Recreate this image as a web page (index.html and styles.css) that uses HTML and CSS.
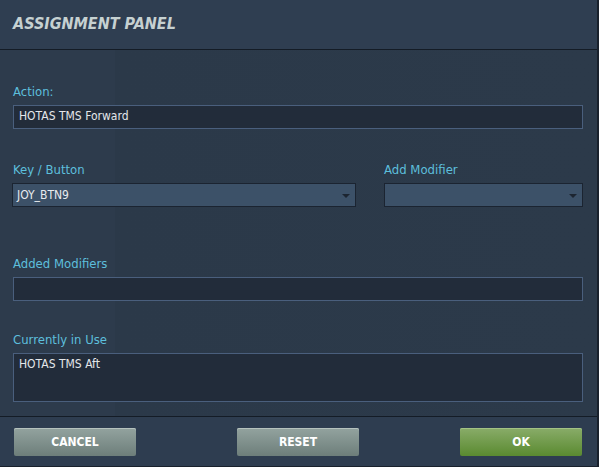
FILE: index.html
```
<!DOCTYPE html>
<html>
<head>
<meta charset="utf-8">
<link rel="stylesheet" href="styles.css">
</head>
<body>
<div class="panel">
  <div class="header"><h1 class="title">ASSIGNMENT PANEL</h1></div>
  <div class="content">
    <div class="label">Action:</div>
    <div class="field">HOTAS TMS Forward</div>

    <div class="row">
      <div class="col col-key">
        <div class="label label-key">Key / Button</div>
        <div class="select">JOY_BTN9<span class="arrow"></span></div>
      </div>
      <div class="col col-mod">
        <div class="label">Add Modifier</div>
        <div class="select"><span class="arrow"></span></div>
      </div>
    </div>

    <div class="label label-added">Added Modifiers</div>
    <div class="field"></div>

    <div class="label label-use">Currently in Use</div>
    <div class="field area">HOTAS TMS Aft</div>
  </div>
  <div class="footer">
    <button class="btn btn-gray">CANCEL</button>
    <button class="btn btn-gray">RESET</button>
    <button class="btn btn-green">OK</button>
  </div>
</div>
</body>
</html>
```

FILE: styles.css
```
* { box-sizing: border-box; }
html, body { margin: 0; padding: 0; background: #2c3a4a; }
body {
  font-family: "DejaVu Sans Condensed", "DejaVu Sans", sans-serif;
  font-stretch: condensed;
}
.panel {
  width: 599px;
  height: 467px;
  display: flex;
  flex-direction: column;
  border-right: 2px solid #19212c;
  border-bottom: 1px solid #19212c;
  background: #2c3a4a;
}
.header {
  height: 50px;
  flex: none;
  background: #2f3e51;
  border-bottom: 1px solid #141c26;
  padding: 14px 0 0 13px;
}
.title {
  margin: 0;
  font-size: 16px;
  line-height: 20px;
  font-weight: bold;
  font-style: italic;
  color: #c6d1d1;
  letter-spacing: 0;
}
.content {
  flex: 1;
  padding: 34px 14px 0 13px;
  background: linear-gradient(90deg, #2d3b4c 0, #2d3b4c 115px, #2b3949 115px, #2c3a4a 100%);
}
.label {
  font-size: 13px;
  line-height: 15px;
  color: #5dbfdc;
  margin-bottom: 6px;
}
.label-key { padding-left: 1px; }
.field {
  height: 24px;
  background: #222c3a;
  border: 1px solid #4a5f7d;
  color: #e4e7ea;
  font-size: 12px;
  line-height: 20px;
  padding-left: 5px;
}
.row {
  display: flex;
  margin-top: 33px;
  margin-left: -1px;
  gap: 28px;
}
.col-key { width: 344px; }
.col-mod { width: 199px; }
.select {
  position: relative;
  height: 24px;
  background: #3c5168;
  border: 1px solid #1b2431;
  color: #e8ebee;
  font-size: 12px;
  line-height: 22px;
  padding-left: 4px;
}
.arrow {
  position: absolute;
  right: 5px;
  top: 10px;
  width: 0;
  height: 0;
  border-left: 4px solid transparent;
  border-right: 4px solid transparent;
  border-top: 4px solid #1c2531;
}
.label-added { margin-top: 49px; }
.label-use { margin-top: 31px; }
.area {
  height: 49px;
  line-height: 16px;
  padding-top: 2px;
}
.footer {
  flex: none;
  height: 50px;
  background: #2e3d50;
  border-top: 1px solid #141c26;
  display: flex;
  justify-content: space-between;
  align-items: flex-start;
  padding: 11px 15px 0 14px;
}
.btn {
  width: 122px;
  height: 28px;
  border: none;
  border-radius: 2px;
  font-family: "DejaVu Sans Condensed", "DejaVu Sans", sans-serif;
  font-stretch: condensed;
  font-weight: bold;
  font-size: 12px;
  color: #ffffff;
  padding: 1px 0 0;
  line-height: 27px;
}
.btn-gray {
  background: linear-gradient(#93a39f, #6d7e7a);
  box-shadow: inset 0 1px 0 #b5c2be;
}
.btn-green {
  background: linear-gradient(#89ac69, #5a8a30);
  box-shadow: inset 0 1px 0 #a3c285;
}
```
